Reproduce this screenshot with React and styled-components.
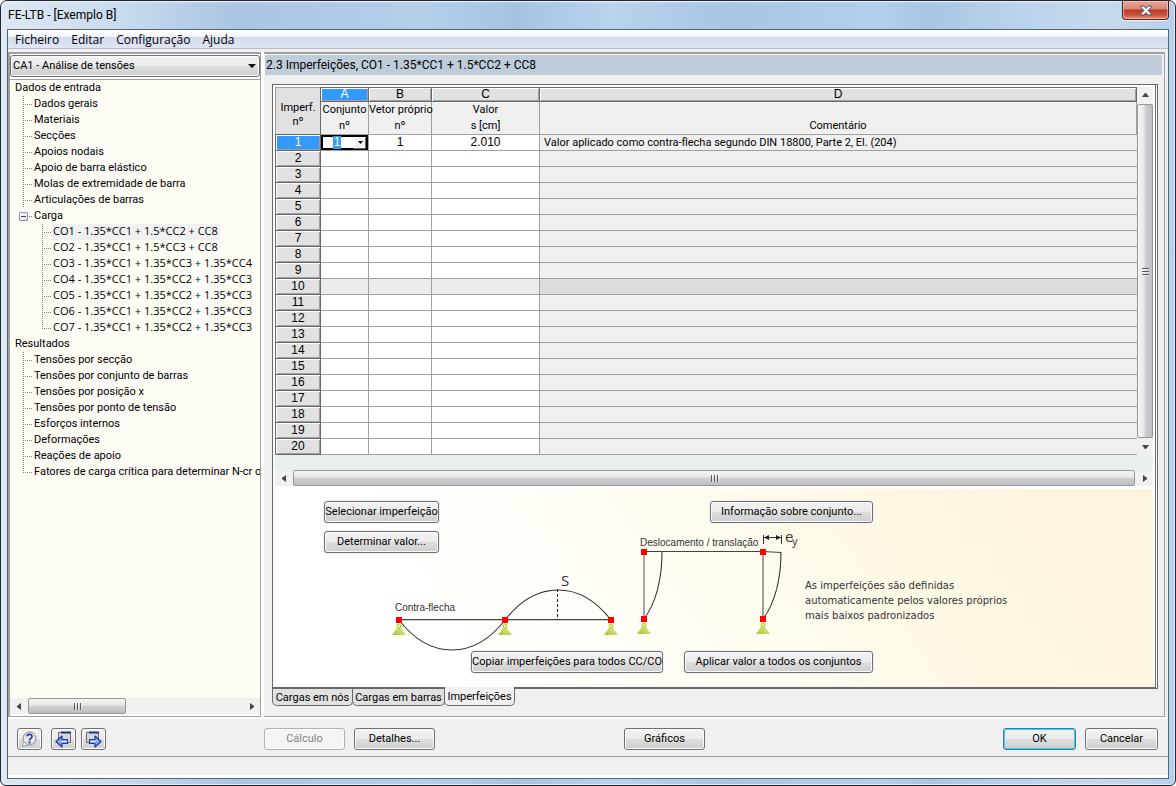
import React, { useState } from "react";
import styled, { createGlobalStyle, css } from "styled-components";

const shell = `Roboto, "Liberation Sans", sans-serif`;
const sans = `"Liberation Sans", Arial, sans-serif`;
const ui = `"Open Sans", "Noto Sans", sans-serif`;

const GlobalStyle = createGlobalStyle`
  *, *::before, *::after { box-sizing: border-box; }
  html { background: #fff; }
  body { margin: 0; font: 11px/16px ${shell}; color: #000; }
  button, input, select { margin: 0; padding: 0; font: inherit; color: inherit; }
  svg { display: block; flex: none; }
`;

const Window = styled.div`
  min-height: 100vh;
  display: flex;
  flex-direction: column;
  padding: 0 6px 6px;
  border: 1px solid #22262c;
  border-radius: 7px 7px 6px 6px;
  background:
    linear-gradient(180deg, rgba(255, 255, 255, 0.75), rgba(255, 255, 255, 0) 2px),
    linear-gradient(90deg, #dfe8f4 0, #c9dbee 10%, #a9c5e2 20%, #b3cfea 36%, #a5c3e0 44%, #b8d3ee 52%, #a8c5e1 62%, #b2cfeb 75%, #a8c6e2 79%, #b8d2ec 86%, #c8d9ec 94%, #b5d0ec 100%);
  box-shadow: inset 0 0 0 1px #e2eefa;
`;

const TitleBar = styled.header`
  display: flex;
  justify-content: space-between;
  align-items: flex-start;
  height: 28px;
  font: 12px/28px ${shell};
  padding-left: 1px;
`;

const Title = styled.h1`
  margin: 0;
  font: inherit;
`;

const CloseButton = styled.button`
  display: flex;
  align-items: center;
  justify-content: center;
  width: 47px;
  height: 19px;
  border: 1px solid #5a1a17;
  border-top: 0;
  border-radius: 0 0 4px 4px;
  background: linear-gradient(#eba79b 0, #d98477 45%, #b93a26 50%, #c4503a 75%, #e39078 100%);
  box-shadow: inset 0 0 0 1px rgba(255, 220, 210, 0.55), 0 1px 0 #eef5fc;
`;

const Client = styled.div`
  flex: 1;
  display: flex;
  flex-direction: column;
  border: 1px solid #56656f;
  background: #f0f0f0;
`;

const MenuBar = styled.nav`
  display: flex;
  gap: 12px;
  height: 19px;
  padding-left: 7px;
  border-bottom: 1px solid #b6bccc;
  background: linear-gradient(#fff 0, #f2f5fa 7px, #d5dbed 7px, #e0e5f4 100%);
  font: 12px/20px ${ui};
`;

const MenuItem = styled.button`
  border: 0;
  background: none;
`;

const Main = styled.div`
  flex: 1;
  display: flex;
  margin: 3px 3px 0 0;
  background: #fff;
`;

const SidePanel = styled.aside`
  flex: none;
  display: flex;
  flex-direction: column;
  width: 253px;
  margin-right: 3px;
  border: 1px solid #a0a0a0;
  border-width: 2px 1px 1px 2px;
  background: #fdfcf5;
`;

const CaseBox = styled.div`
  position: relative;
  padding: 1px 0 2px;
  border-bottom: 1px solid #a0a0a0;
  background: #fff;

  svg {
    position: absolute;
    right: 4px;
    top: 10px;
    pointer-events: none;
  }
`;

const CaseSelect = styled.select`
  appearance: none;
  display: block;
  width: 100%;
  height: 22px;
  padding-left: 2px;
  border: 1px solid #707070;
  border-radius: 3px;
  background: linear-gradient(#f2f2f2 0, #ebebeb 50%, #dddddd 50%, #cfcfcf 100%);
  box-shadow: inset 0 0 0 1px #fbfbfb;
`;

const Tree = styled.ul`
  flex: 1;
  margin: 0;
  padding: 0;
  list-style: none;
  overflow: hidden;
`;

const TreeRow = styled.li`
  display: flex;
  align-items: center;
  height: 16px;
  padding-left: ${(p) => [3, 13, 32][p.$level]}px;
  white-space: nowrap;
  ${(p) => p.$level === 2 && css`font: 11px/14px ${ui};`}
`;

const Branch = styled.span`
  flex: none;
  width: 9px;
  height: 16px;
  background:
    repeating-linear-gradient(90deg, #808080 0 1px, transparent 1px 2px) 0 8px / 100% 1px no-repeat,
    repeating-linear-gradient(#808080 0 1px, transparent 1px 2px) 0 0 / 1px ${(p) => (p.$last ? "9px" : "100%")} no-repeat;
`;

const Expander = styled.button`
  flex: none;
  display: flex;
  align-items: center;
  justify-content: center;
  width: 9px;
  height: 9px;
  margin-left: -4px;
  border: 1px solid #8f959b;
  border-radius: 1px;
  background: linear-gradient(135deg, #fff, #dcdcdc);

  &::before {
    content: "";
    width: 5px;
    height: 1px;
    background: #2a4a9a;
  }

  & + span {
    width: 4px;
    background: repeating-linear-gradient(90deg, transparent 0 1px, #808080 1px 2px) 0 8px / 100% 1px no-repeat;
  }
`;

const TreeLink = styled.a`
  height: 16px;
  padding: 0 2px;
  color: inherit;
  text-decoration: none;
  background: ${(p) => (p.$active ? "#f0f0f0" : "none")};
`;

const ScrollTrack = styled.div`
  flex: none;
  display: flex;
  flex-direction: ${(p) => (p.$vertical ? "column" : "row")};
  background: #f0f0f0;
  ${(p) => (p.$vertical ? "width: 16px;" : "height: 16px;")}
`;

const ScrollButton = styled.button`
  flex: none;
  display: flex;
  align-items: center;
  justify-content: center;
  width: 18px;
  height: 16px;
  border: 0;
  background: none;
  ${(p) => p.$vertical && css`width: 16px; height: 17px;`}
`;

const Thumb = styled.div`
  display: flex;
  align-items: center;
  justify-content: center;
  border: 1px solid #979797;
  border-radius: 2px;
  background: linear-gradient(${(p) => (p.$vertical ? "90deg" : "180deg")}, #f5f5f5 0, #e6e6e7 45%, #cfcfd2 50%, #bfbfc3 100%);
  ${(p) => (p.$short ? "width: 98px;" : "flex: 1;")}
`;

const Content = styled.main`
  flex: 1;
  min-width: 0;
  display: flex;
  flex-direction: column;
  border: 1px solid #a0a0a0;
  border-width: 2px 1px 1px 0;
  background: #f0f0f0;
`;

const SectionTitle = styled.h2`
  margin: 1px 2px 9px 0;
  padding-left: 1px;
  border-left: 1px solid #fff;
  background: #bfccd9;
  font: 12px/20px ${shell};
`;

const Sheet = styled.section`
  flex: 1;
  display: flex;
  flex-direction: column;
  margin: 0 6px 0 8px;
  padding: 2px 1px 0 2px;
  border: 1px solid #696969;
  border-right: 3px double #696969;
  border-bottom-width: 2px;
  background: #fff;
`;

const GridArea = styled.div`
  display: flex;
  margin-right: 1px;
  padding-bottom: 15px;
  background: #e9efee;
`;

const Grid = styled.table`
  flex: 1;
  width: 100%;
  min-width: 0;
  table-layout: fixed;
  border-collapse: separate;
  border-spacing: 0;
  background: #fff;
  font: 12px/15px ${sans};

  th, td {
    height: 16px;
    padding: 0;
    font-weight: 400;
    text-align: center;
    white-space: nowrap;
    border-right: 1px solid #a0a0a0;
    border-bottom: 1px solid #a0a0a0;
  }
`;

const raised = css`
  background: ${(p) => (p.$active ? "#3399ff" : "#e1e1e1")};
  color: ${(p) => (p.$active ? "#fff" : "#000")};
  box-shadow: inset 1px 1px 0 #fff, inset -1px -1px 0 #a0a0a0;
`;

const ColumnLetter = styled.th`
  && {
    ${raised}
    height: 15px;
    line-height: 13px;
    border-color: #696969;
    border-top: 1px solid #696969;
  }
`;

const Corner = styled.th`
  && {
    background: #e1e1e1;
    border-top: 1px solid #a0a0a0;
    border-left: 1px solid #a0a0a0;
    border-right-color: #696969;
    border-bottom-color: #696969;
    padding-top: 7px;
    font: 11px/14px ${shell};
  }
`;

const ColumnName = styled.th`
  && {
    height: 33px;
    background: #f0f0f0;
    font: 11px/16px ${shell};
    vertical-align: bottom;
  }
`;

const RowNumber = styled.th`
  && {
    ${raised}
    border-color: #696969;
    border-left: 1px solid #696969;
  }
`;

const Cell = styled.td`
  background: ${(p) => (p.$band ? (p.$locked ? "#dcdcdc" : "#ececec") : p.$locked ? "#f0f0f0" : "#fff")};

  &&:last-child {
    padding-left: 4px;
    border-right: 0;
    text-align: left;
    font: 11px/15px ${shell};
  }
`;

const Editor = styled.div`
  display: flex;
  justify-content: flex-end;
  align-items: center;
  height: 15px;
  border: 1px solid #000;
  box-shadow: inset 0 0 0 1px #000;
  padding-right: 1px;
`;

const EditorInput = styled.input`
  width: 8px;
  height: 13px;
  margin-right: 13px;
  border: 0;
  outline: 0;
  background: #3399ff;
  color: #fff;
  text-align: center;
`;

const EditorDrop = styled.button`
  display: flex;
  align-items: center;
  justify-content: center;
  width: 12px;
  height: 12px;
  border: 1px solid #696969;
  border-color: #fff #696969 #696969 #fff;
  background: #f0f0f0;
`;

const SheetScroll = styled.div`
  margin: 0 1px 3px 0;
`;

const Scene = styled.div`
  flex: 1;
  margin-right: 1px;
  padding: 12px 20px 14px 49px;
  background: linear-gradient(55deg, #fff 15%, #fffdf4 45%, #fff8e6 68%, #fdf5dd 90%);
`;

const SceneRow = styled.div`
  display: flex;
  margin-left: ${(p) => p.$indent || 0}px;
  gap: ${(p) => p.$gap || 0}px;
`;

const SceneBody = styled.div`
  display: flex;
  margin-top: 8px;
`;

const BowColumn = styled.div`
  width: 312px;

  svg { margin: 11px 0 0 68px; }

  & + svg { margin-top: -8px; }
`;

const Note = styled.p`
  margin: 47px 0 0 5px;
  color: #333;
  font: 10px/15px "DejaVu Sans", sans-serif;
`;

const Button = styled.button`
  flex: none;
  width: ${(p) => p.$width}px;
  height: 22px;
  border: 1px solid #707070;
  border-radius: 3px;
  background: linear-gradient(#f2f2f2 0, #ebebeb 50%, #dddddd 50%, #cfcfcf 100%);
  box-shadow: inset 0 0 0 1px #fbfbfb, 0 0 0 1px #f0f0f0;
  font: 11px/20px ${shell};
  white-space: nowrap;

  &:disabled {
    border-color: #adb2b5;
    background: #f4f4f4;
    color: #838383;
  }

  ${(p) => p.$primary && css`
    border-color: #2c7fb5;
    box-shadow: inset 0 0 0 1px #45cdf5;
  `}
`;

const IconButton = styled(Button)`
  display: flex;
  align-items: center;
  justify-content: center;
`;

const Tabs = styled.div`
  display: flex;
  align-items: flex-start;
  margin: 0 6px 10px 8px;
`;

const Tab = styled.button`
  position: relative;
  width: ${(p) => p.$width}px;
  height: ${(p) => (p.$active ? 19 : 17)}px;
  margin: ${(p) => (p.$active ? "-2px" : "0")} -1px 0 0;
  border: 1px solid #696969;
  border-top: 0;
  border-radius: 0 0 5px 5px;
  background: ${(p) => (p.$active ? "#f0f0f0" : "#e1e1e1")};
  padding-top: 2px;
  font: 11px/14px ${shell};
  white-space: nowrap;
`;

const Actions = styled.footer`
  display: flex;
  gap: 9px;
  padding: 9px 10px 6px 9px;
`;

const Slot = styled.div`
  display: flex;
  gap: ${(p) => p.$gap}px;
  width: ${(p) => p.$width}px;
`;

const Spacer = styled.div`
  flex: 1;
`;

const StatusBar = styled.div`
  height: 22px;
  border-top: 1px solid #a0a0a0;
  border-bottom: 3px solid #fff;
  background: #f0f0f0;
`;

const Shadow = styled.div`
  height: 2px;
  background: #fff;
`;

const inputs = ["Dados gerais", "Materiais", "Secções", "Apoios nodais", "Apoio de barra elástico", "Molas de extremidade de barra", "Articulações de barras"];
const loads = [
  "CO1 - 1.35*CC1 + 1.5*CC2 + CC8",
  "CO2 - 1.35*CC1 + 1.5*CC3 + CC8",
  "CO3 - 1.35*CC1 + 1.35*CC3 + 1.35*CC4",
  "CO4 - 1.35*CC1 + 1.35*CC2 + 1.35*CC3",
  "CO5 - 1.35*CC1 + 1.35*CC2 + 1.35*CC3",
  "CO6 - 1.35*CC1 + 1.35*CC2 + 1.35*CC3",
  "CO7 - 1.35*CC1 + 1.35*CC2 + 1.35*CC3",
];
const results = ["Tensões por secção", "Tensões por conjunto de barras", "Tensões por posição x", "Tensões por ponto de tensão", "Esforços internos", "Deformações", "Reações de apoio", "Fatores de carga crítica para determinar N-cr o"];
const rows = Array.from({ length: 20 }, (_, i) => i + 1);

const arrows = {
  left: "M5 0v7L1 4V3z",
  right: "M2 0v7l4-3V3z",
  up: "M0 5h7L4 1H3z",
  down: "M0 2h7L4 6H3z",
};

function Arrow({ to }) {
  return (
    <svg width="7" height="7" viewBox="0 0 7 7"><path d={arrows[to]} fill="#444" /></svg>
  );
}

function Grip({ vertical }) {
  return (
    <svg width="9" height="9" viewBox="0 0 9 9">
      <g transform={vertical ? "rotate(90 4.5 4.5)" : undefined}>
        <path d="M1.5 1v7M4.5 1v7M7.5 1v7" stroke="#5a5a5e" />
        <path d="M2.5 1v7M5.5 1v7M8.5 1v7" stroke="#fff" opacity=".6" />
      </g>
    </svg>
  );
}

function Scrollbar({ vertical, short }) {
  return (
    <ScrollTrack $vertical={vertical}>
      <ScrollButton $vertical={vertical} aria-label="Anterior"><Arrow to={vertical ? "up" : "left"} /></ScrollButton>
      <Thumb $vertical={vertical} $short={short}><Grip vertical={vertical} /></Thumb>
      {short && <Spacer />}
      <ScrollButton $vertical={vertical} aria-label="Seguinte"><Arrow to={vertical ? "down" : "right"} /></ScrollButton>
    </ScrollTrack>
  );
}

function Support({ x, y }) {
  return (
    <g>
      <path d={`M${x} ${y + 5}l7 10h-14z`} fill="url(#support)" />
      <circle cx={x} cy={y + 6} r="2.5" fill="#c3d64a" />
      <circle cx={x} cy={y + 6} r="1" fill="#f2f7c8" />
      <rect x={x - 3} y={y - 3} width="6" height="6" fill="#f00" />
    </g>
  );
}

function BowDrawing() {
  return (
    <svg width="232" height="87" viewBox="0 -8 232 87" fontFamily="Liberation Sans" fill="#333">
      <defs>
        <linearGradient id="support" x1="0" x2="1" y1="1" y2="0">
          <stop offset="0" stopColor="#a9c22b" />
          <stop offset="1" stopColor="#eef3b4" />
        </linearGradient>
      </defs>
      <path d="M7 48.500h212" stroke="#ccc" />
      <path d="M7 47.500h212" stroke="#444" />
      <path d="M7 48C38 88 82 88 113 48C144 8 188 8 219 48" fill="none" stroke="#333" strokeWidth="1.100" />
      <path d="M165.500 17v31" stroke="#222" strokeDasharray="3 2" />
      <text x="3" y="39" fontSize="10">Contra-flecha</text>
      <text x="169" y="14" fontSize="15" fontFamily="Open Sans">S</text>
      <Support x={7} y={48} />
      <Support x={113} y={48} />
      <Support x={219} y={48} />
    </svg>
  );
}

function FrameDrawing() {
  return (
    <svg width="164" height="114" viewBox="0 -8 164 114" fontFamily="Liberation Sans" fill="#333">
      <path d="M8 20.500h119l18 1M127 20.500V88" fill="none" stroke="#444" />
      <path d="M8 20V88" stroke="#888" strokeWidth="1.500" />
      <path d="M26 21C26 48 20 72 8 88M145 21C145 48 139 72 127 88" fill="none" stroke="#222" />
      <path d="M127.500 4v9M145.500 4v9M128 6.500h17" stroke="#333" />
      <path d="M128 6.500l5-2.500v5zM145 6.500l-5-2.500v5z" fill="#222" />
      <text x="4" y="15" fontSize="10">Deslocamento / translação</text>
      <text x="149" y="11" fontSize="15" fontFamily="Open Sans">e</text>
      <text x="156" y="14" fontSize="11" fontFamily="Open Sans">y</text>
      <rect x="5" y="18" width="6" height="6" fill="#f00" />
      <rect x="124" y="18" width="6" height="6" fill="#f00" />
      <Support x={8} y={88} />
      <Support x={127} y={88} />
    </svg>
  );
}

function HelpIcon() {
  return (
    <svg width="17" height="17" viewBox="0 0 17 17">
      <circle cx="8.500" cy="7.500" r="6.500" fill="#e3e6ea" stroke="#8b9096" />
      <path d="M2.500 10.500L1.500 15.500 6.500 13.700z" fill="#f4f5f6" stroke="#8b9096" strokeWidth=".8" />
      <path d="M6 5.300C6.200 2.700 11.200 2.700 11 5.500 10.800 7.500 8.700 7.300 8.500 9.500" fill="none" stroke="#1f3f93" strokeWidth="1.700" />
      <rect x="7.500" y="10.500" width="2" height="2" fill="#1f3f93" />
    </svg>
  );
}

function PageIcon({ next }) {
  return (
    <svg width="17" height="17" viewBox="0 0 17 17">
      <g transform={next ? undefined : "translate(17 0) scale(-1 1)"}>
        <path d="M1.500 1.500h12v10h-12z" fill="#d5d7da" stroke="#66696f" />
        <path d={next ? "M4 1.500h10" : "M1 1.500h10"} stroke="#27357f" strokeWidth="2" />
        <path
          d="M4.500 8.500h5.500v-3.500l6 5.500-6 5.500v-3.500h-5.500z"
          fill="#86aaf5"
          stroke="#203a9a"
          strokeWidth="1.200"
          strokeLinejoin="round"
        />
        <path d="M5 10.500h6" stroke="#dce8ff" />
      </g>
    </svg>
  );
}

export default function App() {
  const [value, setValue] = useState("1");
  return (
    <>
      <GlobalStyle />
      <Window>
        <TitleBar>
          <Title>FE-LTB - [Exemplo B]</Title>
          <CloseButton aria-label="Fechar">
            <svg width="12" height="11" viewBox="0 0 12 11">
              <path d="M1 1h3l2 2.500L8 1h3v1.500L8 5.500l3 3V10H8L6 7.500 4 10H1V8.500l3-3-3-3z" fill="#fff" stroke="#4b4f63" />
            </svg>
          </CloseButton>
        </TitleBar>
        <Client>
          <MenuBar>
            {["Ficheiro", "Editar", "Configuração", "Ajuda"].map((m) => <MenuItem key={m}>{m}</MenuItem>)}
          </MenuBar>
          <Main>
            <SidePanel>
              <CaseBox>
                <CaseSelect aria-label="Caso"><option>CA1 - Análise de tensões</option></CaseSelect>
                <svg width="8" height="4" viewBox="0 0 8 4"><path d="M0 0h8L4 4z" /></svg>
              </CaseBox>
              <Tree>
                <TreeRow $level={0}><TreeLink href="#dados">Dados de entrada</TreeLink></TreeRow>
                {inputs.map((t) => (
                  <TreeRow key={t} $level={1}><Branch /><TreeLink href="#item">{t}</TreeLink></TreeRow>
                ))}
                <TreeRow $level={1}><Expander aria-label="Recolher" /><Branch /><TreeLink href="#carga">Carga</TreeLink></TreeRow>
                {loads.map((t, i) => (
                  <TreeRow key={t} $level={2}>
                    <Branch $last={i === loads.length - 1} />
                    <TreeLink href="#co" $active={i === 0}>{t}</TreeLink>
                  </TreeRow>
                ))}
                <TreeRow $level={0}><TreeLink href="#resultados">Resultados</TreeLink></TreeRow>
                {results.map((t, i) => (
                  <TreeRow key={t} $level={1}><Branch $last={i === results.length - 1} /><TreeLink href="#item">{t}</TreeLink></TreeRow>
                ))}
              </Tree>
              <Scrollbar short />
              <Shadow />
            </SidePanel>
            <Content>
              <SectionTitle>2.3 Imperfeições, CO1 - 1.35*CC1 + 1.5*CC2 + CC8</SectionTitle>
              <Sheet>
                <GridArea>
                  <Grid>
                    <colgroup>
                      <col width="46" /><col width="48" /><col width="63" /><col width="108" /><col />
                    </colgroup>
                    <thead>
                      <tr>
                        <Corner rowSpan={2}>Imperf.<br />nº</Corner>
                        {["A", "B", "C", "D"].map((c) => <ColumnLetter key={c} $active={c === "A"}>{c}</ColumnLetter>)}
                      </tr>
                      <tr>
                        <ColumnName>Conjunto<br />nº</ColumnName>
                        <ColumnName>Vetor próprio<br />nº</ColumnName>
                        <ColumnName>Valor<br />s [cm]</ColumnName>
                        <ColumnName>Comentário</ColumnName>
                      </tr>
                    </thead>
                    <tbody>
                      {rows.map((n) => (
                        <tr key={n}>
                          <RowNumber $active={n === 1}>{n}</RowNumber>
                          <Cell $band={n === 10}>
                            {n === 1 && (
                              <Editor>
                                <EditorInput aria-label="Conjunto nº" value={value} onChange={(e) => setValue(e.target.value)} />
                                <EditorDrop aria-label="Abrir lista">
                                  <svg width="5" height="3" viewBox="0 0 5 3"><path d="M0 0h5L2.500 3z" /></svg>
                                </EditorDrop>
                              </Editor>
                            )}
                          </Cell>
                          <Cell $band={n === 10}>{n === 1 && "1"}</Cell>
                          <Cell $band={n === 10}>{n === 1 && "2.010"}</Cell>
                          <Cell $band={n === 10} $locked>{n === 1 && "Valor aplicado como contra-flecha segundo DIN 18800, Parte 2, El. (204)"}</Cell>
                        </tr>
                      ))}
                    </tbody>
                  </Grid>
                  <Scrollbar vertical />
                </GridArea>
                <SheetScroll><Scrollbar /></SheetScroll>
                <Scene>
                  <SceneRow $gap={271}>
                    <Button $width={115}>Selecionar imperfeição</Button>
                    <Button $width={163}>Informação sobre conjunto...</Button>
                  </SceneRow>
                  <SceneBody>
                    <BowColumn>
                      <Button $width={115}>Determinar valor...</Button>
                      <BowDrawing />
                    </BowColumn>
                    <FrameDrawing />
                    <Note>As imperfeições são definidas<br />automaticamente pelos valores próprios<br />mais baixos padronizados</Note>
                  </SceneBody>
                  <SceneRow $indent={147} $gap={21}>
                    <Button $width={192}>Copiar imperfeições para todos CC/CO</Button>
                    <Button $width={189}>Aplicar valor a todos os conjuntos</Button>
                  </SceneRow>
                </Scene>
              </Sheet>
              <Tabs>
                <Tab $width={81}>Cargas em nós</Tab>
                <Tab $width={93}>Cargas em barras</Tab>
                <Tab $width={71} $active>Imperfeições</Tab>
              </Tabs>
            </Content>
          </Main>
          <Shadow />
          <Actions>
            <Slot $width={238} $gap={9}>
              <IconButton $width={25} aria-label="Ajuda"><HelpIcon /></IconButton>
              <Slot $width={55} $gap={5}>
                <IconButton $width={25} aria-label="Página anterior"><PageIcon /></IconButton>
                <IconButton $width={25} aria-label="Página seguinte"><PageIcon next /></IconButton>
              </Slot>
            </Slot>
            <Button $width={81} disabled>Cálculo</Button>
            <Button $width={81}>Detalhes...</Button>
            <Slot $width={171} />
            <Button $width={81}>Gráficos</Button>
            <Spacer />
            <Button $primary $width={73}>OK</Button>
            <Button $width={73}>Cancelar</Button>
          </Actions>
          <StatusBar />
        </Client>
      </Window>
    </>
  );
}
